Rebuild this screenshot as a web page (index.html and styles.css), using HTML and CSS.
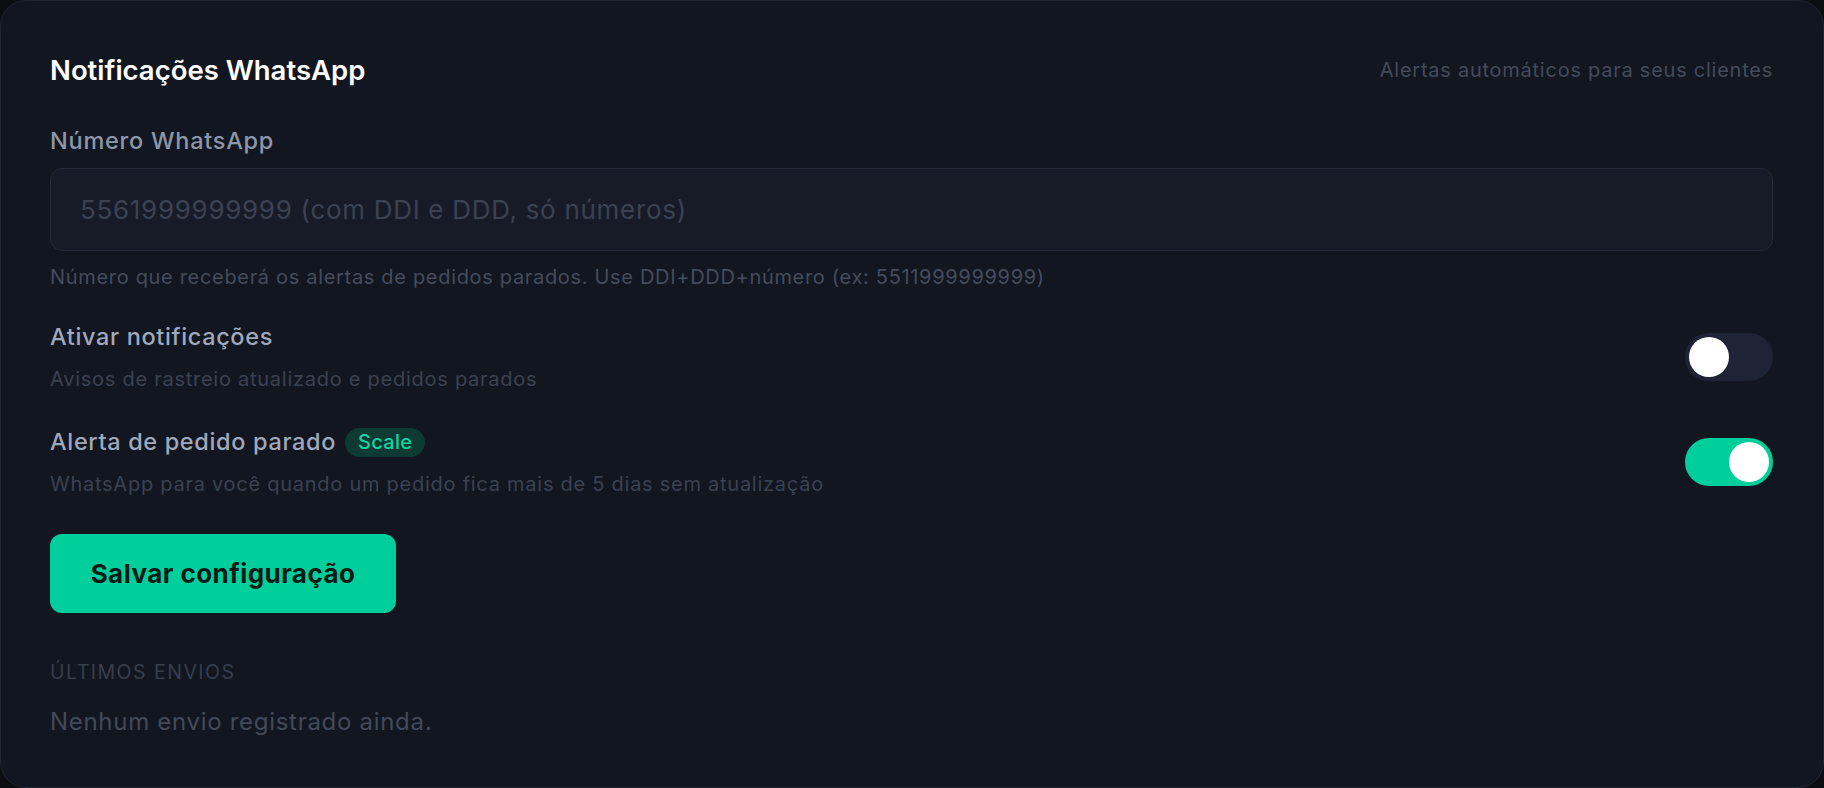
FILE: index.html
```html
<!DOCTYPE html>
<html lang="pt-BR">
<head>
<meta charset="utf-8">
<title>Notificações WhatsApp</title>
<link rel="stylesheet" href="styles.css">
</head>
<body>
<section class="card">
  <header class="card-head">
    <h2 class="card-title">Notificações WhatsApp</h2>
    <span class="card-sub">Alertas automáticos para seus clientes</span>
  </header>

  <label class="field-label" for="wa">Número WhatsApp</label>
  <input class="field-input" id="wa" type="text" placeholder="5561999999999 (com DDI e DDD, só números)">
  <p class="field-help">Número que receberá os alertas de pedidos parados. Use DDI+DDD+número (ex: 5511999999999)</p>

  <div class="setting setting-first">
    <div class="setting-text">
      <div class="setting-title">Ativar notificações</div>
      <div class="setting-desc">Avisos de rastreio atualizado e pedidos parados</div>
    </div>
    <span class="toggle"><span class="knob"></span></span>
  </div>

  <div class="setting setting-second">
    <div class="setting-text">
      <div class="setting-title">Alerta de pedido parado <span class="badge">Scale</span></div>
      <div class="setting-desc">WhatsApp para você quando um pedido fica mais de 5 dias sem atualização</div>
    </div>
    <span class="toggle toggle-on"><span class="knob"></span></span>
  </div>

  <button class="btn-save" type="button">Salvar configuração</button>

  <h3 class="log-title">Últimos envios</h3>
  <p class="log-empty">Nenhum envio registrado ainda.</p>
</section>
</body>
</html>
```

FILE: styles.css
```css
* { box-sizing: border-box; }
html, body { margin: 0; padding: 0; }
body {
  background: #0b0e13;
  font-family: Inter, "Noto Sans", sans-serif;
  width: 1824px;
  height: 788px;
  overflow: hidden;
}
.card {
  width: 1824px;
  height: 788px;
  background: #121620;
  border: 1px solid #1f2533;
  border-radius: 26px;
  padding: 53px 50px 0 49px;
  display: flex;
  flex-direction: column;
}
.card-head {
  display: flex;
  justify-content: space-between;
  align-items: center;
  height: 32px;
}
.card-title {
  margin: 0;
  font-size: 27.5px;
  font-weight: 600;
  color: #ffffff;
  line-height: 32px;
}
.card-sub {
  font-size: 20px;
  letter-spacing: 0.75px;
  color: #434b5b;
}
.field-label {
  margin-top: 39px;
  font-size: 23.5px;
  font-weight: 500;
  letter-spacing: 0.75px;
  color: #8d96a8;
  line-height: 32px;
}
.field-input {
  margin-top: 11px;
  height: 83px;
  width: 100%;
  background: #171b27;
  border: 1px solid #232a3a;
  border-radius: 12px;
  padding: 0 29px;
  font-family: inherit;
  font-size: 26px;
  letter-spacing: 0.7px;
  color: #c8cfdc;
  outline: none;
}
.field-input::placeholder { color: #3b4252; }
.field-help {
  margin: 12px 0 0;
  font-size: 20px;
  letter-spacing: 0.68px;
  line-height: 28px;
  color: #444c5d;
}
.setting {
  display: flex;
  justify-content: space-between;
  align-items: center;
}
.setting-first { margin-top: 30px; }
.setting-second { margin-top: 33px; }
.setting-title {
  font-size: 23.5px;
  font-weight: 500;
  letter-spacing: 0.65px;
  color: #a0a9bb;
  line-height: 32px;
  display: flex;
  align-items: center;
  gap: 9px;
}
.setting-desc {
  margin-top: 12px;
  font-size: 20px;
  letter-spacing: 0.74px;
  line-height: 28px;
  color: #3a4252;
}
.badge {
  display: inline-flex;
  align-items: center;
  height: 29px;
  padding: 0 13px;
  border-radius: 15px;
  background: #0d3a32;
  color: #12d3a2;
  font-size: 20px;
  font-weight: 500;
  letter-spacing: 0.3px;
}
.toggle {
  width: 88px;
  height: 48px;
  border-radius: 24px;
  background: #1e2435;
  padding: 4px;
  display: flex;
  flex-shrink: 0;
}
.toggle-on {
  background: #00cf9c;
  justify-content: flex-end;
}
.knob {
  width: 40px;
  height: 40px;
  border-radius: 50%;
  background: #ffffff;
}
.btn-save {
  margin-top: 36px;
  align-self: flex-start;
  height: 79px;
  width: 346px;
  border: 0;
  border-radius: 12px;
  background: #00cf9c;
  color: #0a1a16;
  font-family: inherit;
  font-size: 26px;
  font-weight: 700;
  letter-spacing: 0.45px;
  padding: 0;
}
.log-title {
  margin: 46px 0 0;
  font-size: 19.5px;
  font-weight: 400;
  text-transform: uppercase;
  letter-spacing: 1.5px;
  color: #373e4d;
  line-height: 26px;
}
.log-empty {
  margin: 21px 0 0;
  font-size: 24px;
  letter-spacing: 0.7px;
  line-height: 32px;
  color: #424a5a;
}
```
